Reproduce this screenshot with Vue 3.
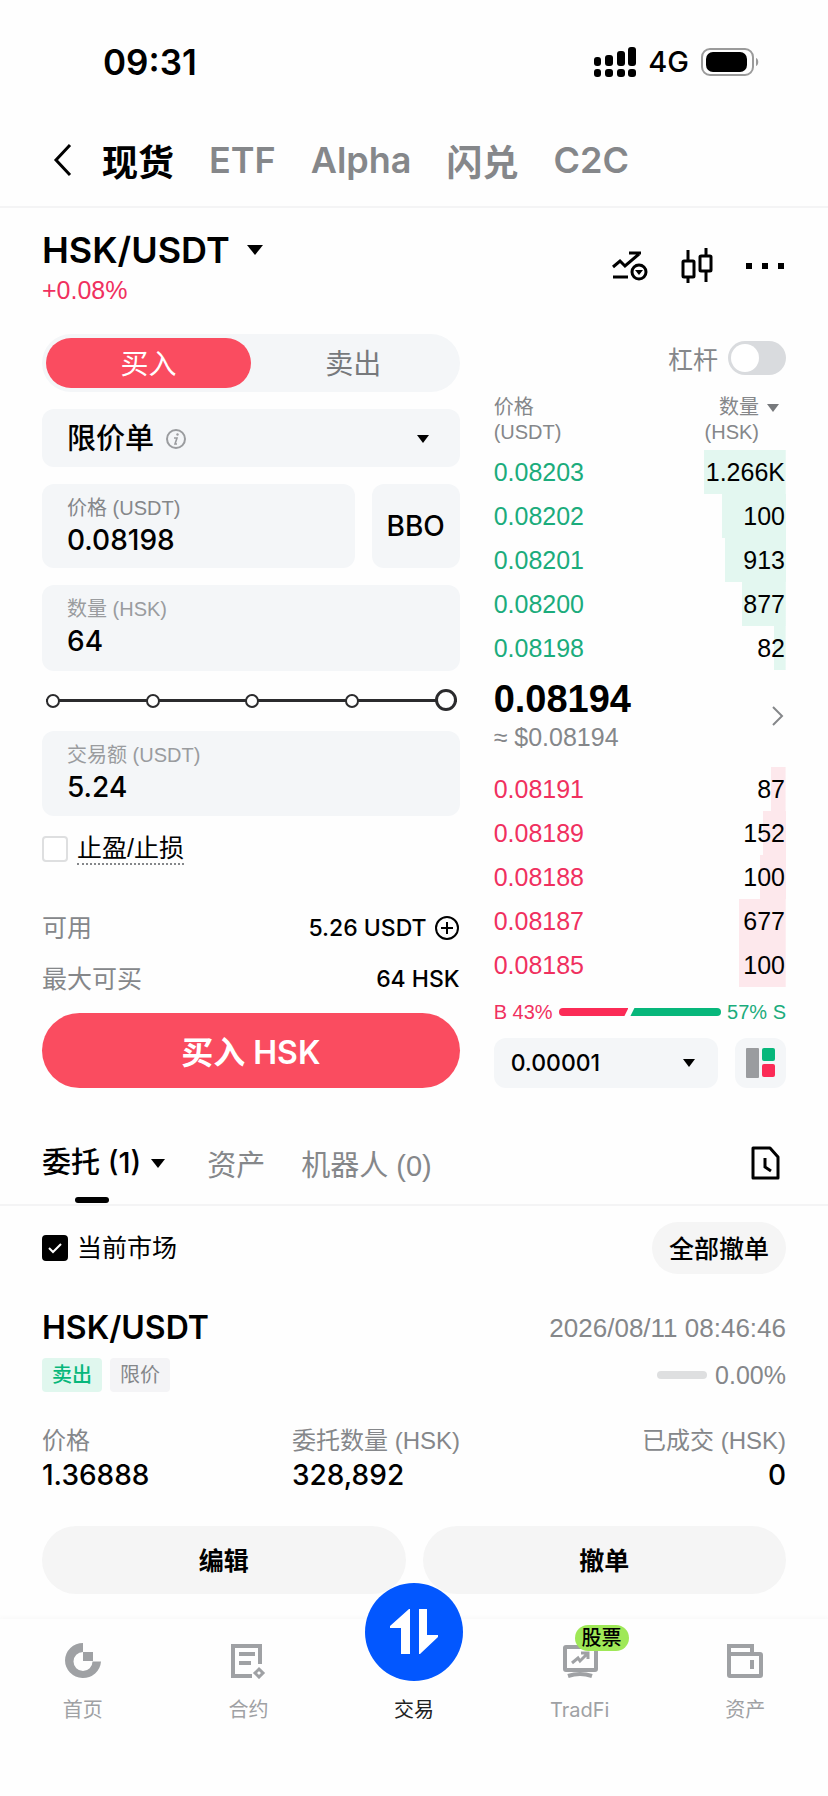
<template>
  <div class="page">
    <div class="status">
      <span class="time">09:31</span>
      <div class="status-right">
        <svg width="42" height="30" viewBox="0 0 42 30" aria-hidden="true">
          <rect x="0" y="10" width="7" height="9" rx="3" />
          <rect x="11" y="8" width="8" height="11" rx="3" />
          <rect x="23" y="4" width="8" height="15" rx="3" />
          <rect x="34" y="0" width="8" height="19" rx="3" />
          <rect x="0" y="22" width="7" height="8" rx="3" />
          <rect x="11" y="22" width="8" height="8" rx="3" />
          <rect x="23" y="22" width="8" height="8" rx="3" />
          <rect x="34" y="22" width="8" height="8" rx="3" />
        </svg>
        <span class="network">4G</span>
        <svg width="58" height="28" viewBox="0 0 58 28" aria-hidden="true">
          <rect x="1" y="1" width="51" height="26" rx="8" fill="none" stroke="#9b9b9b" stroke-width="2" />
          <rect x="5" y="4" width="41" height="20" rx="7" />
          <path d="M55 10c3 1 3 7 0 8z" fill="#9b9b9b" />
        </svg>
      </div>
    </div>

    <nav class="top-nav">
      <button class="back" aria-label="返回">
        <svg width="20" height="34" viewBox="0 0 20 34" fill="none" stroke="#000" stroke-width="3">
          <path d="M17 2L3 17l14 15" />
        </svg>
      </button>
      <a
        v-for="item in topTabs"
        :key="item"
        href="#"
        :class="{ active: item === activeTop }"
        @click.prevent="activeTop = item"
      >{{ item }}</a>
    </nav>

    <header class="pair">
      <div class="pair-info">
        <button class="pair-name">HSK/USDT <span class="caret large"></span></button>
        <span class="pct">+0.08%</span>
      </div>
      <div class="pair-tools">
        <button aria-label="指标">
          <svg width="36" height="32" viewBox="0 0 36 32" fill="none" stroke="#000" stroke-width="3">
            <path d="M1 17l7-6 5 5L27 4M17 3h12M1 27h15" />
            <circle cx="27" cy="22" r="7" />
            <path d="M23 20h8l-4 5z" fill="#000" stroke="none" />
          </svg>
        </button>
        <button aria-label="K线">
          <svg width="34" height="36" viewBox="0 0 34 36" fill="none" stroke="#000" stroke-width="3">
            <rect x="3" y="13" width="11" height="16" rx="1" />
            <path d="M8 2v11M8 29v6M26 0v8M26 23v11" />
            <rect x="20" y="8" width="11" height="15" rx="1" />
          </svg>
        </button>
        <button aria-label="更多">
          <svg width="38" height="8" viewBox="0 0 38 8">
            <rect x="0" y="1" width="6" height="6" />
            <rect x="16" y="1" width="6" height="6" />
            <rect x="32" y="1" width="6" height="6" />
          </svg>
        </button>
      </div>
    </header>

    <main class="trade">
      <form class="form" @submit.prevent>
        <div class="side">
          <button type="button" :class="{ on: side === 'buy' }" @click="side = 'buy'">买入</button>
          <button type="button" :class="{ on: side === 'sell' }" @click="side = 'sell'">卖出</button>
        </div>

        <div class="type-box">
          <select v-model="orderType" aria-label="订单类型">
            <option>限价单</option>
            <option>市价单</option>
          </select>
          <button type="button" class="info" aria-label="说明">
            <svg width="22" height="22" viewBox="0 0 22 22" fill="none" stroke="#9a9c9f" stroke-width="2">
              <circle cx="11" cy="11" r="9" />
              <path d="M9 10h3l-2 6h2" stroke-width="1.6" />
              <circle cx="12.5" cy="6.5" r="1.2" fill="#9a9c9f" stroke="none" />
            </svg>
          </button>
          <span class="caret"></span>
        </div>

        <div class="price-row">
          <label class="field dark">
            <span>价格 (USDT)</span>
            <input type="text" v-model="price" />
          </label>
          <button type="button" class="bbo">BBO</button>
        </div>

        <label class="field">
          <span>数量 (HSK)</span>
          <input type="text" v-model="amount" />
        </label>

        <div class="slider">
          <input type="range" min="0" max="100" v-model="percent" aria-label="仓位比例" />
          <div class="ticks"><i v-for="n in 4" :key="n"></i></div>
        </div>

        <label class="field">
          <span>交易额 (USDT)</span>
          <input type="text" v-model="total" />
        </label>

        <label class="check">
          <input type="checkbox" v-model="tpsl" />
          <span class="dotted">止盈/止损</span>
        </label>

        <div class="balance first">
          <span>可用</span>
          <button type="button">
            5.26 USDT
            <svg width="26" height="26" viewBox="0 0 26 26" fill="none" stroke="#000" stroke-width="2">
              <circle cx="13" cy="13" r="11" />
              <path d="M13 7v12M7 13h12" />
            </svg>
          </button>
        </div>
        <div class="balance">
          <span>最大可买</span>
          <strong>64 HSK</strong>
        </div>
        <button type="submit" class="submit">买入 HSK</button>
      </form>

      <section class="book">
        <label class="margin">
          杠杆
          <input type="checkbox" v-model="margin" />
        </label>

        <table>
          <thead>
            <tr>
              <th>价格<br />(USDT)</th>
              <th>
                <button class="sort">
                  <span>数量</span><span class="caret gray"></span>
                  <span>(HSK)</span>
                </button>
              </th>
            </tr>
          </thead>
          <tbody class="asks">
            <tr v-for="row in asks" :key="row.price" :style="{ backgroundSize: row.depth + '% 100%' }">
              <td>{{ row.price }}</td>
              <td>{{ row.qty }}</td>
            </tr>
          </tbody>
          <tbody>
            <tr class="last">
              <td>
                <div class="last-price">0.08194</div>
                <div class="last-usd">≈ $0.08194</div>
              </td>
              <td>
                <button aria-label="详情">
                  <svg width="14" height="22" viewBox="0 0 14 22" fill="none" stroke="#85878a" stroke-width="2">
                    <path d="M2 2l9 9-9 9" />
                  </svg>
                </button>
              </td>
            </tr>
          </tbody>
          <tbody class="bids">
            <tr v-for="row in bids" :key="row.price" :style="{ backgroundSize: row.depth + '% 100%' }">
              <td>{{ row.price }}</td>
              <td>{{ row.qty }}</td>
            </tr>
          </tbody>
        </table>

        <div class="ratio">
          <span class="b">B {{ buyRatio }}%</span>
          <div class="ratio-bar">
            <i class="buy" :style="{ width: buyRatio + '%' }"></i>
            <i class="sell"></i>
          </div>
          <span class="s">{{ 100 - buyRatio }}% S</span>
        </div>

        <div class="book-foot">
          <div class="step-box">
            <select v-model="step" aria-label="价格精度">
              <option>0.00001</option>
              <option>0.0001</option>
            </select>
            <span class="caret"></span>
          </div>
          <button class="layout" aria-label="盘口布局">
            <svg width="32" height="30" viewBox="0 0 32 30">
              <rect x="1" y="0" width="13" height="30" rx="1" fill="#9a9c9f" />
              <rect x="17" y="0" width="13" height="13" rx="2" fill="#07b77b" />
              <rect x="17" y="16" width="13" height="13" rx="2" fill="#fb2b56" />
            </svg>
          </button>
        </div>
      </section>
    </main>

    <nav class="order-nav">
      <a href="#" class="active"><span>委托 (1)</span><span class="caret mid"></span></a>
      <a href="#">资产</a>
      <a href="#">机器人 (0)</a>
      <button aria-label="历史记录">
        <svg width="30" height="36" viewBox="0 0 30 36" fill="none" stroke="#000" stroke-width="3">
          <path d="M2 3h17l8 9v21H2z" stroke-linejoin="round" />
          <path d="M14 13v9l6 4" />
        </svg>
      </button>
    </nav>

    <section class="orders">
      <div class="orders-head">
        <label class="check">
          <input type="checkbox" v-model="currentOnly" />
          <span>当前市场</span>
        </label>
        <button class="cancel-all">全部撤单</button>
      </div>

      <div class="row title">
        <h2>HSK/USDT</h2>
        <time>2026/08/11 08:46:46</time>
      </div>
      <div class="row tags">
        <div>
          <span class="tag sell">卖出</span>
          <span class="tag">限价</span>
        </div>
        <div class="progress"><i></i>0.00%</div>
      </div>
      <dl>
        <div v-for="d in details" :key="d.label">
          <dt>{{ d.label }}</dt>
          <dd>{{ d.value }}</dd>
        </div>
      </dl>
      <div class="actions">
        <button>编辑</button>
        <button>撤单</button>
      </div>
    </section>

    <nav class="tabbar">
      <a href="#">
        <svg width="36" height="36" viewBox="0 0 36 36" fill="#9fa1a4">
          <path d="M18 0v9a9.500 9.500 0 1 0 9.500 9.500h8.500A18 17.500 0 1 1 18 0z" />
          <rect x="18" y="9" width="10" height="9" />
        </svg>
        <span>首页</span>
      </a>
      <a href="#">
        <svg width="36" height="36" viewBox="0 0 36 36" fill="none" stroke="#9fa1a4" stroke-width="4">
          <path d="M22 33H3V3h27v18M9 11h16M9 20h12" />
          <path d="M29 26l4 4-4 4-4-4z" stroke-width="3" />
        </svg>
        <span>合约</span>
      </a>
      <a href="#" class="current">
        <i class="circle">
          <svg width="50" height="46" viewBox="0 0 50 46" fill="#fff">
            <path d="M20 0h1v45h-9V19H1v-2z" />
            <path d="M30 0h8v26h11v2L31 45h-1z" />
          </svg>
        </i>
        <span>交易</span>
      </a>
      <a href="#">
        <i class="tradfi">
          <svg width="36" height="36" viewBox="0 0 36 36" fill="none" stroke="#9fa1a4" stroke-width="4">
            <rect x="3" y="4" width="31" height="23" rx="1" />
            <path d="M6 33q12-4 24 0" />
            <path d="M10 20l6-5 2 3 7-7M19 10h7v6" stroke-width="3" />
          </svg>
          <b>股票</b>
        </i>
        <span>TradFi</span>
      </a>
      <a href="#">
        <svg width="38" height="36" viewBox="0 0 38 36" fill="none" stroke="#9fa1a4" stroke-width="4">
          <rect x="3" y="11" width="32" height="22" rx="1" />
          <path d="M3 12V3h23v8M26 17v9" />
        </svg>
        <span>资产</span>
      </a>
    </nav>
  </div>
</template>

<script setup>
import { ref } from "vue";

const topTabs = ["现货", "ETF", "Alpha", "闪兑", "C2C"];
const activeTop = ref("现货");
const side = ref("buy");
const orderType = ref("限价单");
const price = ref("0.08198");
const amount = ref("64");
const total = ref("5.24");
const percent = ref(100);
const tpsl = ref(false);
const margin = ref(false);
const step = ref("0.00001");
const currentOnly = ref(true);
const buyRatio = ref(43);

// depth: ancho de la barra de profundidad en %
const asks = [
  { price: "0.08203", qty: "1.266K", depth: 28 },
  { price: "0.08202", qty: "100", depth: 22 },
  { price: "0.08201", qty: "913", depth: 21 },
  { price: "0.08200", qty: "877", depth: 15 },
  { price: "0.08198", qty: "82", depth: 4 },
];
const bids = [
  { price: "0.08191", qty: "87", depth: 5 },
  { price: "0.08189", qty: "152", depth: 8 },
  { price: "0.08188", qty: "100", depth: 9 },
  { price: "0.08187", qty: "677", depth: 16 },
  { price: "0.08185", qty: "100", depth: 16 },
];

const details = [
  { label: "价格", value: "1.36888" },
  { label: "委托数量 (HSK)", value: "328,892" },
  { label: "已成交 (HSK)", value: "0" },
];
</script>

<style>
body {
  margin: 0;
  background: #fefefe;
}
</style>

<style scoped>
* {
  box-sizing: border-box;
}
.page {
  font-family: "Liberation Sans", "Noto Sans CJK SC", sans-serif;
  font-size: 25px;
  color: #000;
}
button,
input,
select {
  font: inherit;
  color: inherit;
  background: none;
  border: none;
  padding: 0;
  margin: 0;
  outline: none;
  appearance: none;
}
button {
  cursor: pointer;
}
a {
  color: inherit;
  text-decoration: none;
}
svg {
  display: block;
  flex: none;
}
.caret {
  display: inline-block;
  border: 6px solid transparent;
  border-top: 8px solid #000;
  border-bottom: none;
}
.caret.mid {
  border-width: 9px 7px 0;
}
.caret.large {
  border-width: 10px 8px 0;
}
.caret.gray {
  border-top-color: #77797c;
}

/* textos con más peso */
.top-nav,
.pair-name,
.field input,
.bbo,
.balance button,
.balance strong,
.submit,
.step-box select,
.order-nav .active,
h2,
dd {
  font-family: Inter, "Noto Sans CJK SC", sans-serif;
  font-weight: 500;
}

/* barra de estado */
.status {
  display: flex;
  justify-content: space-between;
  align-items: center;
  padding: 40px 69px 32px 103px;
  line-height: 44px;
  font-family: Inter, sans-serif;
}
.time {
  font-size: 35px;
  font-weight: 600;
}
.status-right {
  display: flex;
  align-items: center;
  gap: 12px;
}
.network {
  font-size: 29px;
  font-weight: 500;
}

.top-nav {
  display: flex;
  align-items: center;
  gap: 35px;
  height: 92px;
  padding: 0 42px 2px 53px;
  border-bottom: 2px solid #f4f4f5;
  font-size: 36px;
  font-weight: 600;
  color: #85878a;
}
.top-nav .active {
  color: #000;
}
.back {
  margin-right: -6px;
}

.pair {
  display: flex;
  justify-content: space-between;
  align-items: center;
  padding: 20px 44px 0 42px;
}
.pair-info {
  display: flex;
  flex-direction: column;
  align-items: flex-start;
  gap: 4px;
}
.pair-name {
  display: flex;
  align-items: center;
  gap: 17px;
  font-size: 36px;
  font-weight: 600;
  line-height: 44px;
}
.pct {
  line-height: 28px;
  color: #f0305f;
}
.pair-tools {
  display: flex;
  align-items: center;
  gap: 32px;
}

.trade {
  display: grid;
  grid-template-columns: 10fr 7fr;
  gap: 34px;
  padding: 30px 42px 0;
}
.form {
  display: flex;
  flex-direction: column;
  gap: 17px;
  min-width: 0;
}
.side {
  display: flex;
  padding: 4px;
  border-radius: 29px;
  background: #f4f6f8;
}
.side button {
  flex: 1;
  height: 50px;
  padding-bottom: 2px;
  border-radius: 25px;
  font-size: 28px;
  color: #77797c;
}
.side .on {
  background: #fa4c60;
  color: #fff;
}
.type-box {
  display: flex;
  align-items: center;
  height: 58px;
  padding: 2px 31px 0 25px;
  border-radius: 12px;
  background: #f4f6f8;
}
.type-box select {
  font-size: 29px;
  font-weight: 500;
}
.info {
  margin-left: 10px;
}
.type-box .caret,
.step-box .caret {
  margin-left: auto;
  pointer-events: none;
}
.price-row {
  display: flex;
  gap: 17px;
}
.field {
  display: flex;
  flex: 1 1 auto;
  flex-direction: column;
  min-width: 0;
  height: 84px;
  padding: 9px 25px;
  border-radius: 12px;
  background: #f4f6f8;
}
.field span {
  font-size: 20px;
  line-height: 30px;
  color: #9a9c9f;
}
.field.dark span {
  color: #85878a;
}
.field input {
  width: 100%;
  height: 34px;
  font-size: 28px;
}
.bbo {
  flex: none;
  width: 88px;
  border-radius: 12px;
  background: #f4f6f8;
  font-size: 28px;
}
.slider {
  display: grid;
  align-items: center;
  height: 26px;
  margin: 0 3px 0 4px;
}
.slider input,
.ticks {
  grid-area: 1 / 1;
}
.slider input {
  width: 100%;
  height: 22px;
}
.slider input::-webkit-slider-runnable-track {
  height: 3px;
  background: #2b2b2d;
}
.slider input::-webkit-slider-thumb {
  appearance: none;
  width: 22px;
  height: 22px;
  margin-top: -10px;
  border: 3px solid #2b2b2d;
  border-radius: 50%;
  background: #fff;
}
.ticks {
  display: grid;
  grid-template-columns: repeat(4, 1fr);
  padding-right: 12px;
  pointer-events: none;
}
.ticks i {
  width: 14px;
  height: 14px;
  border: 2px solid #2b2b2d;
  border-radius: 50%;
  background: #fff;
}
.check {
  display: flex;
  align-items: center;
  gap: 9px;
  line-height: 32px;
}
.check input {
  width: 26px;
  height: 26px;
  border: 2px solid #dedfe0;
  border-radius: 4px;
  background: #fff;
}
.check input:checked {
  border-color: #000;
  background: #000 url("data:image/svg+xml,%3Csvg xmlns='http://www.w3.org/2000/svg' viewBox='0 0 22 22'%3E%3Cpath d='M5 11l4 4 8-8' fill='none' stroke='white' stroke-width='2'/%3E%3C/svg%3E") center / 22px no-repeat;
}
.dotted {
  border-bottom: 2px dotted #85878a;
  line-height: 30px;
}
.balance {
  display: flex;
  justify-content: space-between;
  line-height: 34px;
  color: #85878a;
}
.balance.first {
  margin-top: 29px;
}
.balance button,
.balance strong {
  display: flex;
  align-items: center;
  gap: 7px;
  font-size: 23px;
  color: #000;
}
.submit {
  height: 75px;
  padding-bottom: 2px;
  border-radius: 38px;
  background: #fa4c60;
  font-size: 32px;
  font-weight: 600;
  color: #fff;
}

/* libro de órdenes */
.book {
  min-width: 0;
}
.margin {
  display: flex;
  justify-content: flex-end;
  align-items: center;
  gap: 10px;
  height: 48px;
  color: #85878a;
}
.margin input {
  display: flex;
  width: 58px;
  height: 34px;
  padding: 3px;
  border-radius: 17px;
  background: #d9dbde;
}
.margin input::before {
  content: "";
  width: 28px;
  height: 28px;
  border-radius: 50%;
  background: #fff;
}
.margin input:checked {
  justify-content: flex-end;
  background: #07b77b;
}
table {
  width: 100%;
  margin-top: 13px;
  border-collapse: collapse;
}
th {
  padding: 0 0 5px;
  font-size: 20px;
  font-weight: 400;
  line-height: 25px;
  text-align: left;
  color: #85878a;
}
th:last-child,
td:last-child {
  text-align: right;
}
.sort {
  display: inline-grid;
  grid-template-columns: auto auto;
  align-items: center;
  column-gap: 8px;
  padding-right: 7px;
  line-height: 25px;
  text-align: right;
  vertical-align: top;
}
td {
  height: 44px;
  padding: 0 1px 0 0;
}
.asks tr,
.bids tr {
  background-position: right top;
  background-repeat: no-repeat;
}
.asks tr {
  background-image: linear-gradient(#e3f7f0, #e3f7f0);
}
.bids tr {
  background-image: linear-gradient(#fde8ec, #fde8ec);
}
.asks td:first-child {
  color: #1bac7c;
}
.bids td:first-child {
  color: #f0305f;
}
.last td {
  height: 97px;
}
.last-price {
  font-size: 38px;
  font-weight: 700;
  line-height: 40px;
}
.last-usd {
  padding-bottom: 4px;
  line-height: 36px;
  color: #85878a;
}
.ratio {
  display: flex;
  align-items: center;
  gap: 6px;
  margin-top: 13px;
  font-size: 20px;
  line-height: 24px;
}
.b {
  color: #f0305f;
}
.s {
  color: #1bac7c;
}
.ratio-bar {
  display: flex;
  flex: 1;
  height: 8px;
}
.ratio-bar .buy {
  border-radius: 4px 0 0 4px;
  background: #fb2b56;
  clip-path: polygon(0 0, 100% 0, calc(100% - 4px) 100%, 0 100%);
}
.ratio-bar .sell {
  flex: 1;
  border-radius: 0 4px 4px 0;
  background: #07b77b;
  clip-path: polygon(6px 0, 100% 0, 100% 100%, 2px 100%);
}
.book-foot {
  display: flex;
  gap: 17px;
  margin-top: 14px;
}
.step-box,
.layout {
  display: flex;
  align-items: center;
  height: 50px;
  border-radius: 12px;
  background: #f4f6f8;
}
.step-box {
  flex: 1;
  padding: 0 23px 0 17px;
}
.step-box select {
  font-size: 23px;
}
.layout {
  justify-content: center;
  width: 51px;
}

.order-nav {
  display: flex;
  align-items: center;
  gap: 36px;
  height: 84px;
  margin-top: 34px;
  padding: 0 47px 0 42px;
  border-bottom: 2px solid #f4f4f5;
  font-size: 29px;
  color: #85878a;
}
.order-nav .active {
  display: flex;
  align-items: center;
  gap: 10px;
  margin-right: 6px;
  color: #000;
}
.order-nav .active span:first-child {
  position: relative;
  line-height: 82px;
}
.order-nav .active span:first-child::after {
  content: "";
  position: absolute;
  bottom: 1px;
  left: 50%;
  width: 34px;
  height: 6px;
  margin-left: -17px;
  border-radius: 3px;
  background: #000;
}
.order-nav button {
  margin-left: auto;
}

.orders {
  padding: 16px 42px 25px;
}
.orders-head,
.row {
  display: flex;
  justify-content: space-between;
  align-items: center;
}
.cancel-all {
  height: 52px;
  padding: 0 17px 2px;
  border-radius: 26px;
  background: #f5f5f5;
  font-weight: 500;
}
.title {
  margin-top: 34px;
  line-height: 40px;
}
h2 {
  margin: 0;
  font-size: 32px;
  font-weight: 600;
}
time {
  font-size: 26px;
  color: #85878a;
}
.tags {
  margin-top: 10px;
}
.tags > div {
  display: flex;
  align-items: center;
  gap: 8px;
  color: #85878a;
}
.tag {
  padding: 0 10px;
  border-radius: 4px;
  background: #f4f4f6;
  font-size: 20px;
  line-height: 34px;
}
.tag.sell {
  background: #e0f7ee;
  color: #07b77b;
  font-weight: 500;
}
.progress i {
  width: 50px;
  height: 8px;
  border-radius: 4px;
  background: #dedfe0;
}
dl {
  display: grid;
  grid-template-columns: repeat(3, 1fr);
  gap: 6px;
  margin: 32px 0 34px;
  line-height: 34px;
}
dl div:last-child {
  text-align: right;
}
dt {
  font-size: 24px;
  color: #85878a;
}
dd {
  margin: 0;
  font-size: 28px;
}
.actions {
  display: flex;
  gap: 17px;
}
.actions button {
  flex: 1;
  height: 68px;
  padding-bottom: 2px;
  border-radius: 34px;
  background: #f5f5f5;
  font-weight: 700;
}

.tabbar {
  display: grid;
  grid-template-columns: repeat(5, 1fr);
  padding: 24px 0 72px;
  box-shadow: 0 -2px 4px #f9f9f9;
}
.tabbar a {
  display: flex;
  flex-direction: column;
  align-items: center;
  gap: 17px;
  font-family: Inter, "Noto Sans CJK SC", sans-serif;
  font-size: 20px;
  line-height: 28px;
  color: #9fa1a4;
}
.tabbar .current {
  color: #222;
}
.circle {
  display: flex;
  justify-content: center;
  align-items: center;
  width: 98px;
  height: 98px;
  margin: -60px 0 -2px;
  border-radius: 50%;
  background: #0257ff;
}
.tradfi {
  position: relative;
}
.tradfi b {
  position: absolute;
  top: -18px;
  left: 13px;
  padding: 0 7px;
  border-radius: 13px;
  background: #9fe857;
  font-style: normal;
  font-weight: 500;
  line-height: 26px;
  white-space: nowrap;
  color: #000;
}
</style>
